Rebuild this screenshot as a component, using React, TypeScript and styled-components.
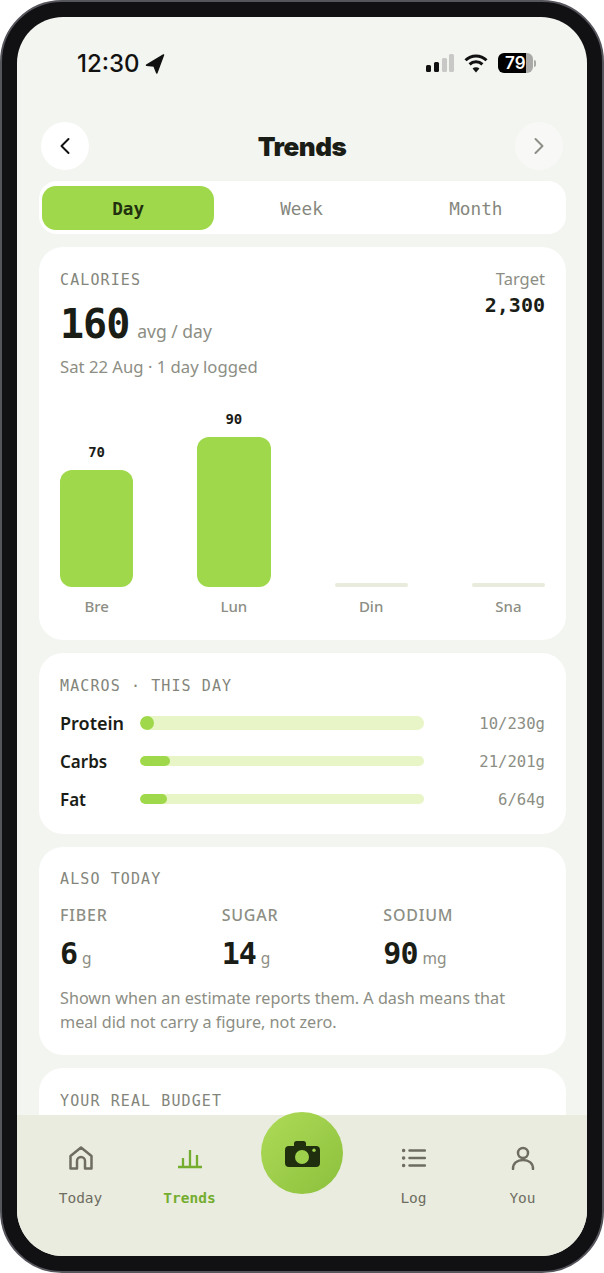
import React from "react";
import styled, { createGlobalStyle } from "styled-components";

const MONO = `"DejaVu Sans Mono", "Liberation Mono", monospace`;
const BODY = `"Noto Sans", "Open Sans", sans-serif`;

const bars = [
  { label: "Bre", value: 70, height: 117 },
  { label: "Lun", value: 90, height: 150 },
  { label: "Din", value: null, height: 4 },
  { label: "Sna", value: null, height: 4 },
];

const macros = [
  { label: "Protein", value: "10/230g", fill: 14, big: true },
  { label: "Carbs", value: "21/201g", fill: 30, big: false },
  { label: "Fat", value: "6/64g", fill: 27, big: false },
];

const extras = [
  { label: "FIBER", value: "6", unit: "g" },
  { label: "SUGAR", value: "14", unit: "g" },
  { label: "SODIUM", value: "90", unit: "mg" },
];

const App = () => {
  return (
    <>
      <GlobalStyle />
      <Phone>
        <Screen>
          <StatusBar>
            <Time>
              12:30
              <svg width="20" height="20" viewBox="0 0 20 20">
                <path d="M18.500 1 1.500 11.200 9 12l2.800 7z" fill="#111" stroke="#111" strokeWidth="1.500" strokeLinejoin="round" />
              </svg>
            </Time>
            <StatusIcons>
              <svg width="28" height="18" viewBox="0 0 28 18">
                <rect x="0" y="11" width="5" height="7" rx="1.500" fill="#111" />
                <rect x="8" y="8" width="5" height="10" rx="1.500" fill="#111" />
                <rect x="16" y="4" width="5" height="14" rx="1.500" fill="#c8c9c6" />
                <rect x="23" y="0" width="5" height="18" rx="1.500" fill="#c8c9c6" />
              </svg>
              <svg width="24" height="20" viewBox="0 0 24 20" fill="none" stroke="#111" strokeWidth="3">
                <path d="M1.500 7.200a15 15 0 0 1 21 0" />
                <path d="M5.600 11.300a9.200 9.200 0 0 1 12.800 0" />
                <path d="M12 19.500 8.600 15.600a4.800 4.800 0 0 1 6.800 0z" fill="#111" stroke="none" />
              </svg>
              <Battery>
                <BatteryBody>79</BatteryBody>
                <BatteryTip />
              </Battery>
            </StatusIcons>
          </StatusBar>
          <Content>
            <Header>
              <NavButton>
                <svg width="20" height="20" viewBox="0 0 20 20" fill="none" stroke="#111" strokeWidth="2" strokeLinecap="round" strokeLinejoin="round">
                  <path d="M13.500 3 6.500 10l7 7" />
                </svg>
              </NavButton>
              <Title>Trends</Title>
              <NavButton $muted>
                <svg width="20" height="20" viewBox="0 0 20 20" fill="none" stroke="#8d8f86" strokeWidth="2" strokeLinecap="round" strokeLinejoin="round">
                  <path d="M6.500 3 13.500 10l-7 7" />
                </svg>
              </NavButton>
            </Header>
            <Segments>
              <Segment $active>Day</Segment>
              <Segment>Week</Segment>
              <Segment>Month</Segment>
            </Segments>
            <CaloriesCard>
              <CaloriesTop>
                <div>
                  <CardLabel>CALORIES</CardLabel>
                  <BigLine>
                    <BigNumber>160</BigNumber>
                    <BigUnit>avg / day</BigUnit>
                  </BigLine>
                  <SubText>Sat 22 Aug · 1 day logged</SubText>
                </div>
                <TargetBox>
                  <TargetLabel>Target</TargetLabel>
                  <TargetValue>2,300</TargetValue>
                </TargetBox>
              </CaloriesTop>
              <Chart>
                {bars.map((bar) => (
                  <BarColumn key={bar.label}>
                    {bar.value !== null && <BarValue>{bar.value}</BarValue>}
                    <Bar $empty={bar.value === null} style={{ height: bar.height }} />
                    <BarLabel>{bar.label}</BarLabel>
                  </BarColumn>
                ))}
              </Chart>
            </CaloriesCard>
            <MacrosCard>
              <CardLabel>MACROS · THIS DAY</CardLabel>
              <MacroList>
                {macros.map((macro) => (
                  <MacroRow key={macro.label}>
                    <MacroName $big={macro.big}>{macro.label}</MacroName>
                    <Track $big={macro.big}>
                      <Fill style={{ width: macro.fill }} />
                    </Track>
                    <MacroValue>{macro.value}</MacroValue>
                  </MacroRow>
                ))}
              </MacroList>
            </MacrosCard>
            <AlsoCard>
              <CardLabel>ALSO TODAY</CardLabel>
              <ExtraGrid>
                {extras.map((extra) => (
                  <div key={extra.label}>
                    <ExtraLabel>{extra.label}</ExtraLabel>
                    <ExtraLine>
                      <ExtraValue>{extra.value}</ExtraValue>
                      <ExtraUnit>{extra.unit}</ExtraUnit>
                    </ExtraLine>
                  </div>
                ))}
              </ExtraGrid>
              <Note>Shown when an estimate reports them. A dash means that meal did not carry a figure, not zero.</Note>
            </AlsoCard>
            <BudgetCard>
              <CardLabel>YOUR REAL BUDGET</CardLabel>
            </BudgetCard>
          </Content>
          <TabBar>
            <Tab>
              <svg width="24" height="24" viewBox="0 0 24 24" fill="none" stroke="#6f6c61" strokeWidth="2.500" strokeLinejoin="round">
                <path d="M1.500 10 12 1.500 22.500 10v12.500H16V15a4 4 0 0 0-8 0v7.500H1.500z" />
              </svg>
              <TabLabel>Today</TabLabel>
            </Tab>
            <Tab>
              <svg width="24" height="24" viewBox="0 0 24 24" fill="none" stroke="#75ad2f" strokeWidth="2.300">
                <path d="M0 21h24M5 21v-9M12 21V4M19 21V9" />
              </svg>
              <TabLabel $active>Trends</TabLabel>
            </Tab>
            <TabSpacer />
            <Tab>
              <svg width="24" height="24" viewBox="0 0 24 24" fill="none" stroke="#6f6c61" strokeWidth="2.500" strokeLinecap="round">
                <path d="M7.500 4.500H23M7.500 12H23M7.500 19.500H23" />
                <path d="M1.600 4.500h.1M1.600 12h.1M1.600 19.500h.1" strokeWidth="3.400" />
              </svg>
              <TabLabel>Log</TabLabel>
            </Tab>
            <Tab>
              <svg width="24" height="24" viewBox="0 0 24 24" fill="none" stroke="#6f6c61" strokeWidth="2.500" strokeLinecap="round">
                <circle cx="12" cy="7" r="5" />
                <path d="M2 23c0-6 4.500-9 10-9s10 3 10 9" />
              </svg>
              <TabLabel>You</TabLabel>
            </Tab>
            <CameraButton>
              <svg width="35" height="26" viewBox="0 0 35 26">
                <path d="M9 5V2.500A2.500 2.500 0 0 1 11.500 0h7A2.500 2.500 0 0 1 21 2.500V5h10a4 4 0 0 1 4 4v13a4 4 0 0 1-4 4H4a4 4 0 0 1-4-4V9a4 4 0 0 1 4-4z" fill="#20300f" />
                <circle cx="17" cy="16" r="7" fill="#9dd14c" />
                <circle cx="29" cy="9.200" r="1.700" fill="#9dd14c" />
              </svg>
            </CameraButton>
          </TabBar>
        </Screen>
      </Phone>
    </>
  );
};

export default App;

const GlobalStyle = createGlobalStyle`
  html, body {
    margin: 0;
    padding: 0;
    background: #fff;
  }
  * {
    box-sizing: border-box;
  }
`;

const Phone = styled.div`
  width: 604px;
  height: 1273px;
  padding: 15px;
  background: #111113;
  border: 2px solid #55555c;
  border-radius: 62px;
  overflow: hidden;
`;

const Screen = styled.div`
  position: relative;
  width: 100%;
  height: 100%;
  display: flex;
  flex-direction: column;
  background: #f3f5f0;
  border-radius: 46px;
  overflow: hidden;
`;

const StatusBar = styled.div`
  flex: none;
  height: 105px;
  padding: 29px 51px 0 60px;
  display: flex;
  justify-content: space-between;
  align-items: flex-start;
`;

const Time = styled.div`
  display: flex;
  align-items: center;
  gap: 5px;
  font-family: Inter, sans-serif;
  font-size: 24px;
  font-weight: 500;
  line-height: 36px;
  color: #111;
`;

const StatusIcons = styled.div`
  display: flex;
  align-items: center;
  gap: 10px;
  height: 34px;
`;

const Battery = styled.div`
  display: flex;
  align-items: center;
  gap: 1px;
`;

const BatteryBody = styled.div`
  width: 35px;
  height: 20px;
  border-radius: 6px;
  background: linear-gradient(90deg, #000 0 79%, #a9aaa7 79% 100%);
  color: #fff;
  font-family: Inter, sans-serif;
  font-size: 17px;
  font-weight: 600;
  line-height: 20px;
  padding-left: 7px;
`;

const BatteryTip = styled.div`
  width: 2px;
  height: 7px;
  border-radius: 0 2px 2px 0;
  background: #a9aaa7;
`;

const Content = styled.div`
  flex: 1;
  min-height: 0;
  overflow: hidden;
  padding: 0 21px 0 22px;
  display: flex;
  flex-direction: column;
  gap: 13px;
`;

const Header = styled.div`
  flex: none;
  display: flex;
  align-items: center;
  justify-content: space-between;
  padding: 0 3px 0 2px;
  margin-bottom: -2px;
`;

const NavButton = styled.div<{ $muted?: boolean }>`
  width: 48px;
  height: 48px;
  border-radius: 50%;
  display: flex;
  align-items: center;
  justify-content: center;
  background: ${(p) => (p.$muted ? "rgba(255, 255, 255, 0.4)" : "#fff")};
`;

const Title = styled.h1`
  margin: 0;
  font-family: Inter, sans-serif;
  font-size: 26px;
  font-weight: 900;
  letter-spacing: -0.5px;
  color: #1a1c16;
`;

const Segments = styled.div`
  flex: none;
  height: 53px;
  padding: 5px 3px 4px;
  display: grid;
  grid-template-columns: repeat(3, 1fr);
  gap: 2px;
  background: #fff;
  border-radius: 18px;
`;

const Segment = styled.div<{ $active?: boolean }>`
  display: flex;
  align-items: center;
  justify-content: center;
  padding: 1px ${(p) => (p.$active ? "0" : "2px")} 0 0;
  border-radius: 14px;
  font-family: ${MONO};
  font-size: 17.700px;
  font-weight: ${(p) => (p.$active ? 700 : 400)};
  color: ${(p) => (p.$active ? "#22300f" : "#85877d")};
  background: ${(p) => (p.$active ? "#9fd94b" : "transparent")};
`;

const Card = styled.section`
  flex: none;
  padding: 21px;
  background: #fff;
  border-radius: 24px;
`;

const CaloriesCard = styled(Card)`
  height: 393px;
  padding-top: 24px;
  padding-bottom: 24px;
  display: flex;
  flex-direction: column;
  justify-content: space-between;
`;

const CaloriesTop = styled.div`
  display: flex;
  justify-content: space-between;
  align-items: flex-start;
`;

const CardLabel = styled.div`
  font-family: ${MONO};
  font-size: 15px;
  line-height: 18px;
  letter-spacing: 1.100px;
  color: #83857b;
`;

const BigLine = styled.div`
  display: flex;
  align-items: baseline;
  gap: 8px;
  margin-top: 10px;
`;

const BigNumber = styled.span`
  font-family: ${MONO};
  font-size: 40px;
  font-weight: 700;
  line-height: 50px;
  letter-spacing: -1px;
  color: #1a1c16;
`;

const BigUnit = styled.span`
  font-family: ${BODY};
  font-size: 17.500px;
  color: #8c8e84;
`;

const SubText = styled.div`
  margin-top: 7px;
  font-family: ${BODY};
  font-size: 16.700px;
  line-height: 22px;
  color: #8c8e84;
`;

const TargetBox = styled.div`
  text-align: right;
`;

const TargetLabel = styled.div`
  font-family: ${BODY};
  font-size: 16.500px;
  line-height: 16px;
  color: #8c8e84;
`;

const TargetValue = styled.div`
  margin-top: 6px;
  font-family: ${MONO};
  font-size: 20px;
  font-weight: 700;
  color: #1a1c16;
`;

const Chart = styled.div`
  display: grid;
  grid-template-columns: repeat(4, 1fr);
  gap: 64px;
  align-items: end;
`;

const BarColumn = styled.div`
  display: flex;
  flex-direction: column;
  align-items: center;
`;

const BarValue = styled.div`
  margin-bottom: 9px;
  font-family: ${MONO};
  font-size: 14px;
  font-weight: 600;
  line-height: 18px;
  color: #1a1c16;
`;

const Bar = styled.div<{ $empty?: boolean }>`
  width: 100%;
  border-radius: ${(p) => (p.$empty ? "2px" : "12px")};
  background: ${(p) => (p.$empty ? "#e9ebdc" : "#9fd94b")};
`;

const BarLabel = styled.div`
  margin-top: 9px;
  font-family: ${BODY};
  font-size: 15px;
  font-weight: 500;
  line-height: 20px;
  color: #8c8e84;
`;

const MacrosCard = styled(Card)`
  height: 181px;
  padding-top: 24px;
`;

const MacroList = styled.div`
  margin-top: 15px;
  display: flex;
  flex-direction: column;
  gap: 12px;
`;

const MacroRow = styled.div`
  display: grid;
  grid-template-columns: 80px 284px 1fr;
  align-items: center;
  height: 26px;
`;

const MacroName = styled.div<{ $big?: boolean }>`
  font-family: ${BODY};
  font-size: ${(p) => (p.$big ? "18px" : "17px")};
  font-weight: 600;
  color: #1a1c16;
`;

const Track = styled.div<{ $big?: boolean }>`
  height: ${(p) => (p.$big ? "14px" : "10px")};
  border-radius: 7px;
  background: #e8f5c6;
  overflow: hidden;
`;

const Fill = styled.div`
  height: 100%;
  border-radius: 7px;
  background: #9fd94b;
`;

const MacroValue = styled.div`
  padding-top: 2px;
  text-align: right;
  font-family: ${MONO};
  font-size: 15.600px;
  color: #8c8e84;
`;

const AlsoCard = styled(Card)`
  height: 208px;
  padding-top: 23px;
`;

const ExtraGrid = styled.div`
  margin-top: 17px;
  display: grid;
  grid-template-columns: repeat(3, 1fr);
`;

const ExtraLabel = styled.div`
  font-family: ${BODY};
  font-size: 16px;
  font-weight: 500;
  line-height: 20px;
  letter-spacing: 0.8px;
  color: #8c8e84;
`;

const ExtraLine = styled.div`
  margin-top: 10px;
  display: flex;
  align-items: baseline;
  gap: 5px;
`;

const ExtraValue = styled.span`
  font-family: ${MONO};
  font-size: 30px;
  font-weight: 700;
  line-height: 38px;
  letter-spacing: -1px;
  color: #1a1c16;
`;

const ExtraUnit = styled.span`
  font-family: ${BODY};
  font-size: 15.500px;
  color: #8c8e84;
`;

const Note = styled.p`
  margin: 13px 0 0;
  font-family: ${BODY};
  font-size: 16.200px;
  line-height: 24px;
  color: #8c8e84;
`;

const BudgetCard = styled(Card)`
  height: 200px;
  padding-top: 24px;
`;

const TabBar = styled.nav`
  flex: none;
  position: relative;
  height: 141px;
  padding: 31px 0 0 9px;
  display: grid;
  grid-template-columns: 109px 109px 117px 105px 113px;
  align-items: start;
  background: #e9ecdf;
`;

const Tab = styled.div`
  display: flex;
  flex-direction: column;
  align-items: center;
  gap: 18px;
`;

const TabSpacer = styled.div``;

const TabLabel = styled.div<{ $active?: boolean }>`
  font-family: ${MONO};
  font-size: 14.500px;
  font-weight: ${(p) => (p.$active ? 700 : 400)};
  line-height: 20px;
  color: ${(p) => (p.$active ? "#75ad2f" : "#6f6c61")};
`;

const CameraButton = styled.div`
  position: absolute;
  left: 244px;
  top: -3px;
  width: 82px;
  height: 82px;
  padding-top: 2px;
  border-radius: 50%;
  display: flex;
  align-items: center;
  justify-content: center;
  background: linear-gradient(135deg, #aedb58, #8cc03c);
`;
